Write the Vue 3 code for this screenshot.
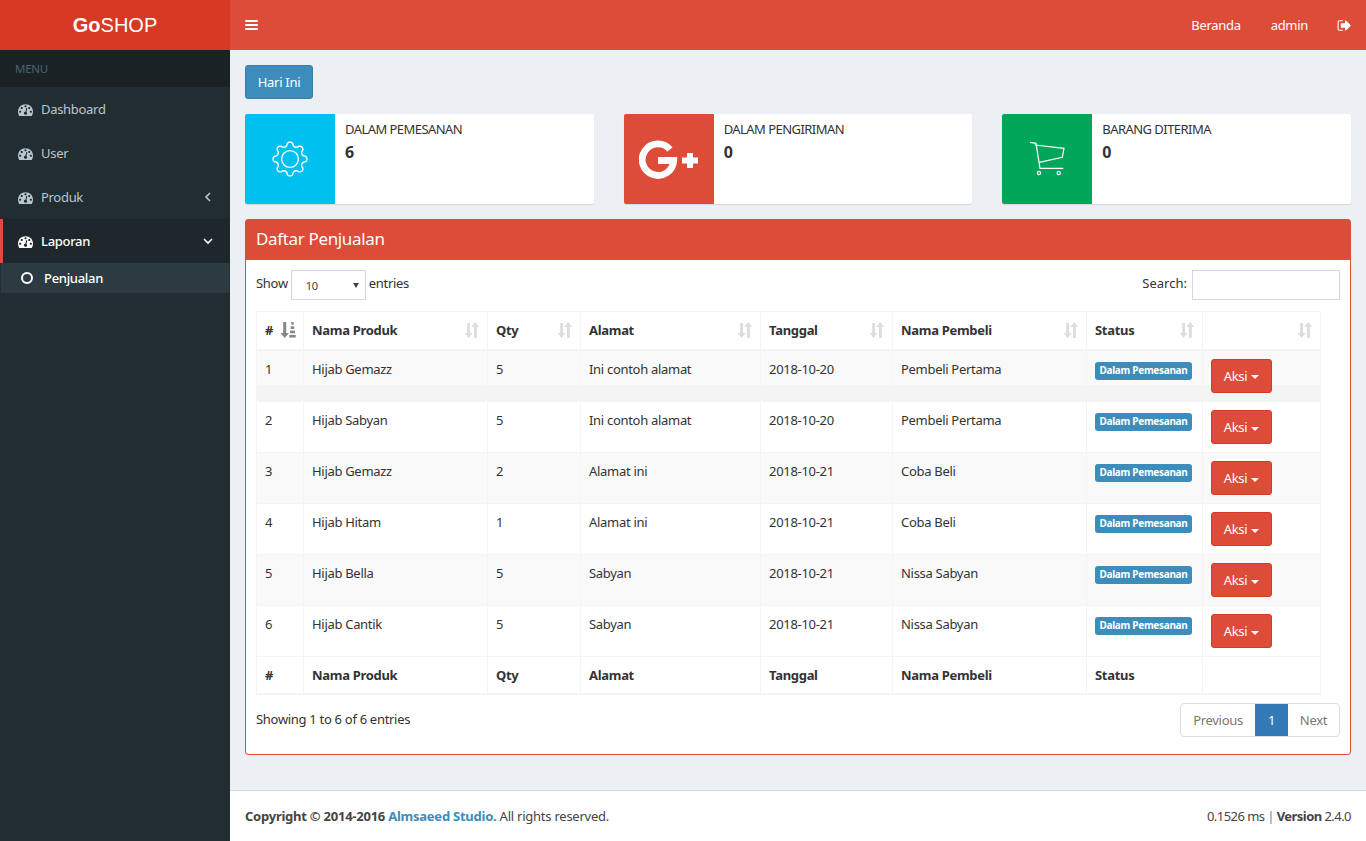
<script setup>
import { computed } from 'vue'
const gauge = 'M384 1152q0-53-37.5-90.5t-90.5-37.5-90.5 37.5-37.5 90.5 37.5 90.5 90.5 37.5 90.5-37.5 37.5-90.5zm192-448q0-53-37.5-90.5t-90.5-37.5-90.5 37.5-37.5 90.5 37.5 90.5 90.5 37.5 90.5-37.5 37.5-90.5zm428 481l101-382q6-26-7.5-48.5t-38.5-29.5-48 6.5-30 39.5l-101 382q-60 5-107 43.5t-63 98.5q-20 77 20 146t117 89 146-20 89-117q16-60-6-117t-72-91zm660-33q0-53-37.5-90.5t-90.5-37.5-90.5 37.5-37.5 90.5 37.5 90.5 90.5 37.5 90.5-37.5 37.5-90.5zm-640-640q0-53-37.5-90.5t-90.5-37.5-90.5 37.5-37.5 90.5 37.5 90.5 90.5 37.5 90.5-37.5 37.5-90.5zm448 192q0-53-37.5-90.5t-90.5-37.5-90.5 37.5-37.5 90.5 37.5 90.5 90.5 37.5 90.5-37.5 37.5-90.5zm320 448q0 261-141 483-19 29-54 29h-1402q-35 0-54-29-141-221-141-483 0-182 71-348t191-286 286-191 348-71 348 71 286 191 191 286 71 348z'
const signout = 'M704 1440q0 4 1 20t.5 26.5-3 23.5-10 19.5-20.5 6.5h-320q-119 0-203.5-84.5t-84.5-203.5v-704q0-119 84.5-203.5t203.5-84.5h320q13 0 22.5 9.5t9.5 22.5q0 4 1 20t.5 26.5-3 23.5-10 19.5-20.5 6.5h-320q-66 0-113 47t-47 113v704q0 66 47 113t113 47h312l11.5 1 11.5 3 8 5.5 7 9 2 13.5zm928-544q0 26-19 45l-544 544q-19 19-45 19t-45-19-19-45v-288h-448q-26 0-45-19t-19-45v-384q0-26 19-45t45-19h448v-288q0-26 19-45t45-19 45 19l544 544q19 19 19 45z'
const gearPath = computed(() => {
  const pts = []
  for (let i = 0; i < 320; i++) {
    const t = (i / 320) * Math.PI * 2
    const c = Math.cos(8 * t)
    const r = 14.9 + 2 * Math.sign(c) * Math.pow(Math.abs(c), 0.6)
    pts.push(`${(20 + r * Math.cos(t)).toFixed(2)} ${(20 + r * Math.sin(t)).toFixed(2)}`)
  }
  return 'M' + pts.join('L') + 'Z'
})
const menu = [
  { label: 'Dashboard' },
  { label: 'User' },
  { label: 'Produk', chevron: 'left' },
  { label: 'Laporan', chevron: 'down', active: true },
]
const cols = [
  { label: '#', w: 47, active: true },
  { label: 'Nama Produk', w: 184 },
  { label: 'Qty', w: 93 },
  { label: 'Alamat', w: 180 },
  { label: 'Tanggal', w: 132 },
  { label: 'Nama Pembeli', w: 194 },
  { label: 'Status', w: 116 },
  { label: '', w: 118 },
]
const rows = [
  [1, 'Hijab Gemazz', 5, 'Ini contoh alamat', '2018-10-20', 'Pembeli Pertama'],
  [2, 'Hijab Sabyan', 5, 'Ini contoh alamat', '2018-10-20', 'Pembeli Pertama'],
  [3, 'Hijab Gemazz', 2, 'Alamat ini', '2018-10-21', 'Coba Beli'],
  [4, 'Hijab Hitam', 1, 'Alamat ini', '2018-10-21', 'Coba Beli'],
  [5, 'Hijab Bella', 5, 'Sabyan', '2018-10-21', 'Nissa Sabyan'],
  [6, 'Hijab Cantik', 5, 'Sabyan', '2018-10-21', 'Nissa Sabyan'],
]
</script>

<template>
  <div class="wrap">
    <aside class="side">
      <div class="logo"><b>Go</b>SHOP</div>
      <div class="menu-head">MENU</div>
      <div v-for="m in menu" :key="m.label" class="item" :class="{ active: m.active }">
        <svg class="gauge" viewBox="0 0 1792 1792"><path :d="gauge" fill="currentColor" /></svg>
        <span class="item-label">{{ m.label }}</span>
        <svg v-if="m.chevron === 'left'" class="chev" viewBox="0 0 10 10"><path d="M7 1 3 5l4 4" /></svg>
        <svg v-if="m.chevron === 'down'" class="chev" viewBox="0 0 10 10"><path d="M1 3l4 4 4-4" /></svg>
      </div>
      <div class="sub"><span class="ring"></span><span>Penjualan</span></div>
    </aside>

    <div class="main">
      <header class="top">
        <div class="burger"><i></i><i></i><i></i></div>
        <div class="top-right">
          <span class="nav">Beranda</span>
          <span class="nav">admin</span>
          <svg class="nav-ic" viewBox="0 0 1792 1792"><path :d="signout" fill="#fff" /></svg>
        </div>
      </header>

      <main class="content">
        <button class="today">Hari Ini</button>
        <div class="boxes">
          <div class="ibox">
            <div class="ib-icon cyan">
              <svg width="40" height="40" viewBox="0 0 40 40" fill="none" stroke="#fff" stroke-width="1.4" stroke-linejoin="round">
                <path :d="gearPath" /><circle cx="20" cy="20" r="8.4" />
              </svg>
            </div>
            <div class="ib-text"><span class="ib-label">DALAM PEMESANAN</span><b class="ib-num">6</b></div>
          </div>
          <div class="ibox">
            <div class="ib-icon red">
              <svg width="60" height="40" viewBox="0 0 60 40">
                <path d="M31 10.500A15.750 15.750 0 1 0 34.700 21.500H19" fill="none" stroke="#fff" stroke-width="6.800" />
                <path d="M48 14h6v4.500h5v6h-5v4.500h-6v-4.500h-5v-6h5z" fill="#fff" />
              </svg>
            </div>
            <div class="ib-text"><span class="ib-label">DALAM PENGIRIMAN</span><b class="ib-num">0</b></div>
          </div>
          <div class="ibox">
            <div class="ib-icon green">
              <svg width="40" height="40" viewBox="0 0 40 40" fill="none" stroke="#fff" stroke-width="1.200">
                <path d="M3 3.300l6 1 4 25h23.300" /><path d="M7.700 6 37 9.300l-1.700 9-23 5" />
                <circle cx="12" cy="34" r="1.600" /><circle cx="31.700" cy="34" r="1.600" />
              </svg>
            </div>
            <div class="ib-text"><span class="ib-label">BARANG DITERIMA</span><b class="ib-num">0</b></div>
          </div>
        </div>

        <section class="panel">
          <h3 class="panel-title">Daftar Penjualan</h3>
          <div class="panel-body">
            <div class="tools">
              <label class="lbl">Show
                <span class="sel"><span>10</span><i class="tri"></i></span>
                entries</label>
              <label class="lbl search-lbl">Search: <input class="search" /></label>
            </div>
            <table class="tbl">
              <colgroup><col v-for="c in cols" :key="c.label" :style="{ width: c.w + 'px' }" /></colgroup>
              <thead>
                <tr>
                  <th v-for="c in cols" :key="c.label">
                    <div class="th-in">
                      <span>{{ c.label }}</span>
                      <svg v-if="c.active" class="sort" viewBox="0 0 14 16" fill="#888">
                        <path d="M2.200 0h3v11H8l-4.300 5L-.5 11h2.700z" />
                        <rect x="10.300" y="0" width="2.400" height="2.700" /><rect x="9.700" y="4.300" width="3.600" height="2.700" />
                        <rect x="9" y="8.600" width="5" height="2.700" /><rect x="8.300" y="12.900" width="6.400" height="2.700" />
                      </svg>
                      <svg v-else class="sort" viewBox="0 0 14 16" fill="#ddd">
                        <path d="M2.200 1h2.800v10h2.600l-4 5-4-5h2.600z" />
                        <path d="M9 16h2.800V5h2.400l-4-5-4 5H9z" />
                      </svg>
                    </div>
                  </th>
                </tr>
              </thead>
              <tbody>
                <tr v-for="(r, i) in rows" :key="r[0]" :class="{ odd: i % 2 === 0, first: i === 0 }">
                  <td v-for="(v, j) in r" :key="j">{{ v }}</td>
                  <td><span class="badge">Dalam Pemesanan</span></td>
                  <td><button class="aksi">Aksi <i class="caret"></i></button></td>
                </tr>
              </tbody>
              <tfoot>
                <tr><th v-for="c in cols" :key="c.label">{{ c.label }}</th></tr>
              </tfoot>
            </table>
            <div class="under">
              <span class="info">Showing 1 to 6 of 6 entries</span>
              <div class="pager">
                <span class="pg">Previous</span><span class="pg on">1</span><span class="pg">Next</span>
              </div>
            </div>
          </div>
        </section>
      </main>

      <footer class="foot">
        <span class="foot-l"><b>Copyright © 2014-2016 <a class="link">Almsaeed Studio.</a></b> All rights reserved.</span>
        <span class="foot-r">0.1526 ms <span class="pipe">|</span> <b>Version</b> 2.4.0</span>
      </footer>
    </div>
  </div>
</template>

<style>
html, body { margin: 0; padding: 0; background: #ecf0f5; }
</style>

<style scoped>
.wrap {
  display: flex; width: 1366px; height: 841px; overflow: hidden;
  font: 13px/20px "Noto Sans", "Open Sans", sans-serif; letter-spacing: -0.3px; color: #333;
}
.side { width: 230px; flex: none; background: #222d32; color: #b8c7ce; }
.logo {
  height: 50px; background: #d73925; color: #fff; text-align: center; letter-spacing: 0;
  font: 20px/50px "Liberation Sans", Arial, sans-serif;
}
.menu-head {
  height: 37px; background: #1a2226; color: #4b646f; font-size: 11.5px; line-height: 38px; padding-left: 15px;
}
.item { height: 44px; display: flex; align-items: center; padding-left: 18px; padding-right: 17px; box-sizing: border-box; }
.item.active { background: #1e282c; color: #fff; border-left: 3px solid #dd4b39; padding-left: 15px; font-weight: 500; }
.gauge { width: 15px; height: 15px; flex: none; }
.item-label { margin-left: 8px; flex: 1; }
.chev { width: 10px; height: 10px; fill: none; stroke: currentColor; stroke-width: 1.6; }
.sub {
  height: 30px; background: #2c3b41; color: #fff; display: flex; align-items: center; padding-left: 20px;
  margin-left: 1px; margin-right: 1px; gap: 11px; font-weight: 500; box-sizing: border-box;
}
.ring { width: 8px; height: 8px; border: 2.5px solid #fff; border-radius: 50%; }

.main { flex: 1; display: flex; flex-direction: column; min-width: 0; }
.top { height: 50px; flex: none; background: #dd4b39; color: #fff; display: flex; align-items: center; justify-content: space-between; padding: 0 15px; }
.burger { display: flex; flex-direction: column; gap: 2px; width: 13px; }
.burger i { display: block; height: 2px; background: #fff; border-radius: 1px; }
.top-right { display: flex; align-items: center; gap: 30px; }
.nav-ic { width: 15px; height: 15px; margin-left: -1px; margin-right: -1px; }
.content { flex: 1; padding: 15px; display: flex; flex-direction: column; align-items: stretch; min-height: 0; }
.today {
  align-self: flex-start; width: 68px; height: 34px; background: #3c8dbc; border: 1px solid #367fa9; border-radius: 3px;
  color: #fff; font: inherit; letter-spacing: inherit; padding: 0;
}
.boxes { display: grid; grid-template-columns: repeat(3, 1fr); gap: 30px; margin-top: 15px; }
.ibox { height: 90px; display: flex; background: #fff; border-radius: 2px; box-shadow: 0 1px 1px rgba(0,0,0,.1); overflow: hidden; }
.ib-icon { width: 90px; flex: none; display: flex; align-items: center; justify-content: center; }
.cyan { background: #00c0ef; } .red { background: #dd4b39; } .green { background: #00a65a; }
.ib-text { padding: 5px 10px; display: flex; flex-direction: column; }
.ib-label { font-size: 13px; letter-spacing: -0.55px; }
.ib-num { font-size: 16px; line-height: 26px; letter-spacing: 0; }
.panel { margin-top: 15px; height: 536px; box-sizing: border-box; border: 1px solid #dd4b39; border-radius: 3px; background: #fff; }
.panel-title {
  margin: 0; height: 40px; background: #dd4b39; color: #fff; font-size: 17px; font-weight: 400; line-height: 38px; padding-left: 10px;
  letter-spacing: -0.35px;
}
.panel-body { padding: 10px 10px 0; }
.tools { display: flex; justify-content: space-between; height: 30px; }
.lbl { display: flex; align-items: flex-start; gap: 3px; font-weight: 400; line-height: 26px; }
.search-lbl { letter-spacing: 0; }
.sel {
  position: relative; width: 75px; height: 30px; box-sizing: border-box; border: 1px solid #d2d6de; background: #fff; font-size: 11px; line-height: 30px; color: #444; padding-left: 14px;
}
.tri { position: absolute; left: 61px; top: 12px; border-top: 5px solid #444; border-left: 3px solid transparent; border-right: 3px solid transparent; }
.search { width: 148px; height: 30px; box-sizing: border-box; border: 1px solid #d2d6de; padding: 0; margin-left: 2px; }
.tbl { margin-top: 11px; border-collapse: collapse; table-layout: fixed; width: 1064px; }
.tbl th, .tbl td { border: 1px solid #f4f4f4; padding: 8px; text-align: left; vertical-align: top; box-sizing: border-box; line-height: 20px; }
.tbl th { font-weight: 700; }
.tbl thead th { border-bottom-width: 2px; height: 38px; }
.tbl tfoot th { border-bottom-width: 2px; height: 37px; }
.th-in { display: flex; justify-content: space-between; align-items: center; min-height: 20px; }
.sort { width: 14px; height: 16px; flex: none; overflow: visible; }
.odd td { background: #f9f9f9; }
.first td { background: linear-gradient(#f9f9f9 34px, #f4f4f4 34px); height: 52px; }
.badge {
  display: inline-block; vertical-align: top; margin-top: 3px; height: 18px; width: 97px; box-sizing: border-box; background: #3c8dbc; color: #fff;
  border-radius: 3px; font-size: 10px; font-weight: 700; line-height: 17px; text-align: center; white-space: nowrap; overflow: hidden;
}
.aksi {
  display: block; width: 61px; height: 34px; background: #dd4b39; border: 1px solid #d73925; border-radius: 3px; color: #fff; font: inherit; letter-spacing: inherit; padding: 0;
}
.caret { display: inline-block; vertical-align: middle; border-top: 4px solid #fff; border-left: 4px solid transparent; border-right: 4px solid transparent; margin-left: 1px; }
.under { display: flex; justify-content: space-between; align-items: flex-start; margin-top: 8px; }
.info { line-height: 32px; }
.pager { display: flex; height: 34px; border: 1px solid #ddd; border-radius: 4px; box-sizing: border-box; width: 160px; overflow: hidden; }
.pg { display: flex; align-items: center; justify-content: center; color: #777; }
.pg:nth-child(1) { width: 74px; } .pg:nth-child(2) { width: 33px; } .pg:nth-child(3) { width: 51px; }
.pg.on { background: #337ab7; color: #fff; }
.foot { height: 51px; flex: none; box-sizing: border-box; background: #fff; border-top: 1px solid #d2d6de; padding: 0 15px 1px; display: flex; align-items: center; justify-content: space-between; color: #444; }
.foot-l { letter-spacing: -0.24px; }
.foot-r { letter-spacing: -0.55px; }
.link { color: #3c8dbc; }
.pipe { color: #3c8dbc; }
</style>
